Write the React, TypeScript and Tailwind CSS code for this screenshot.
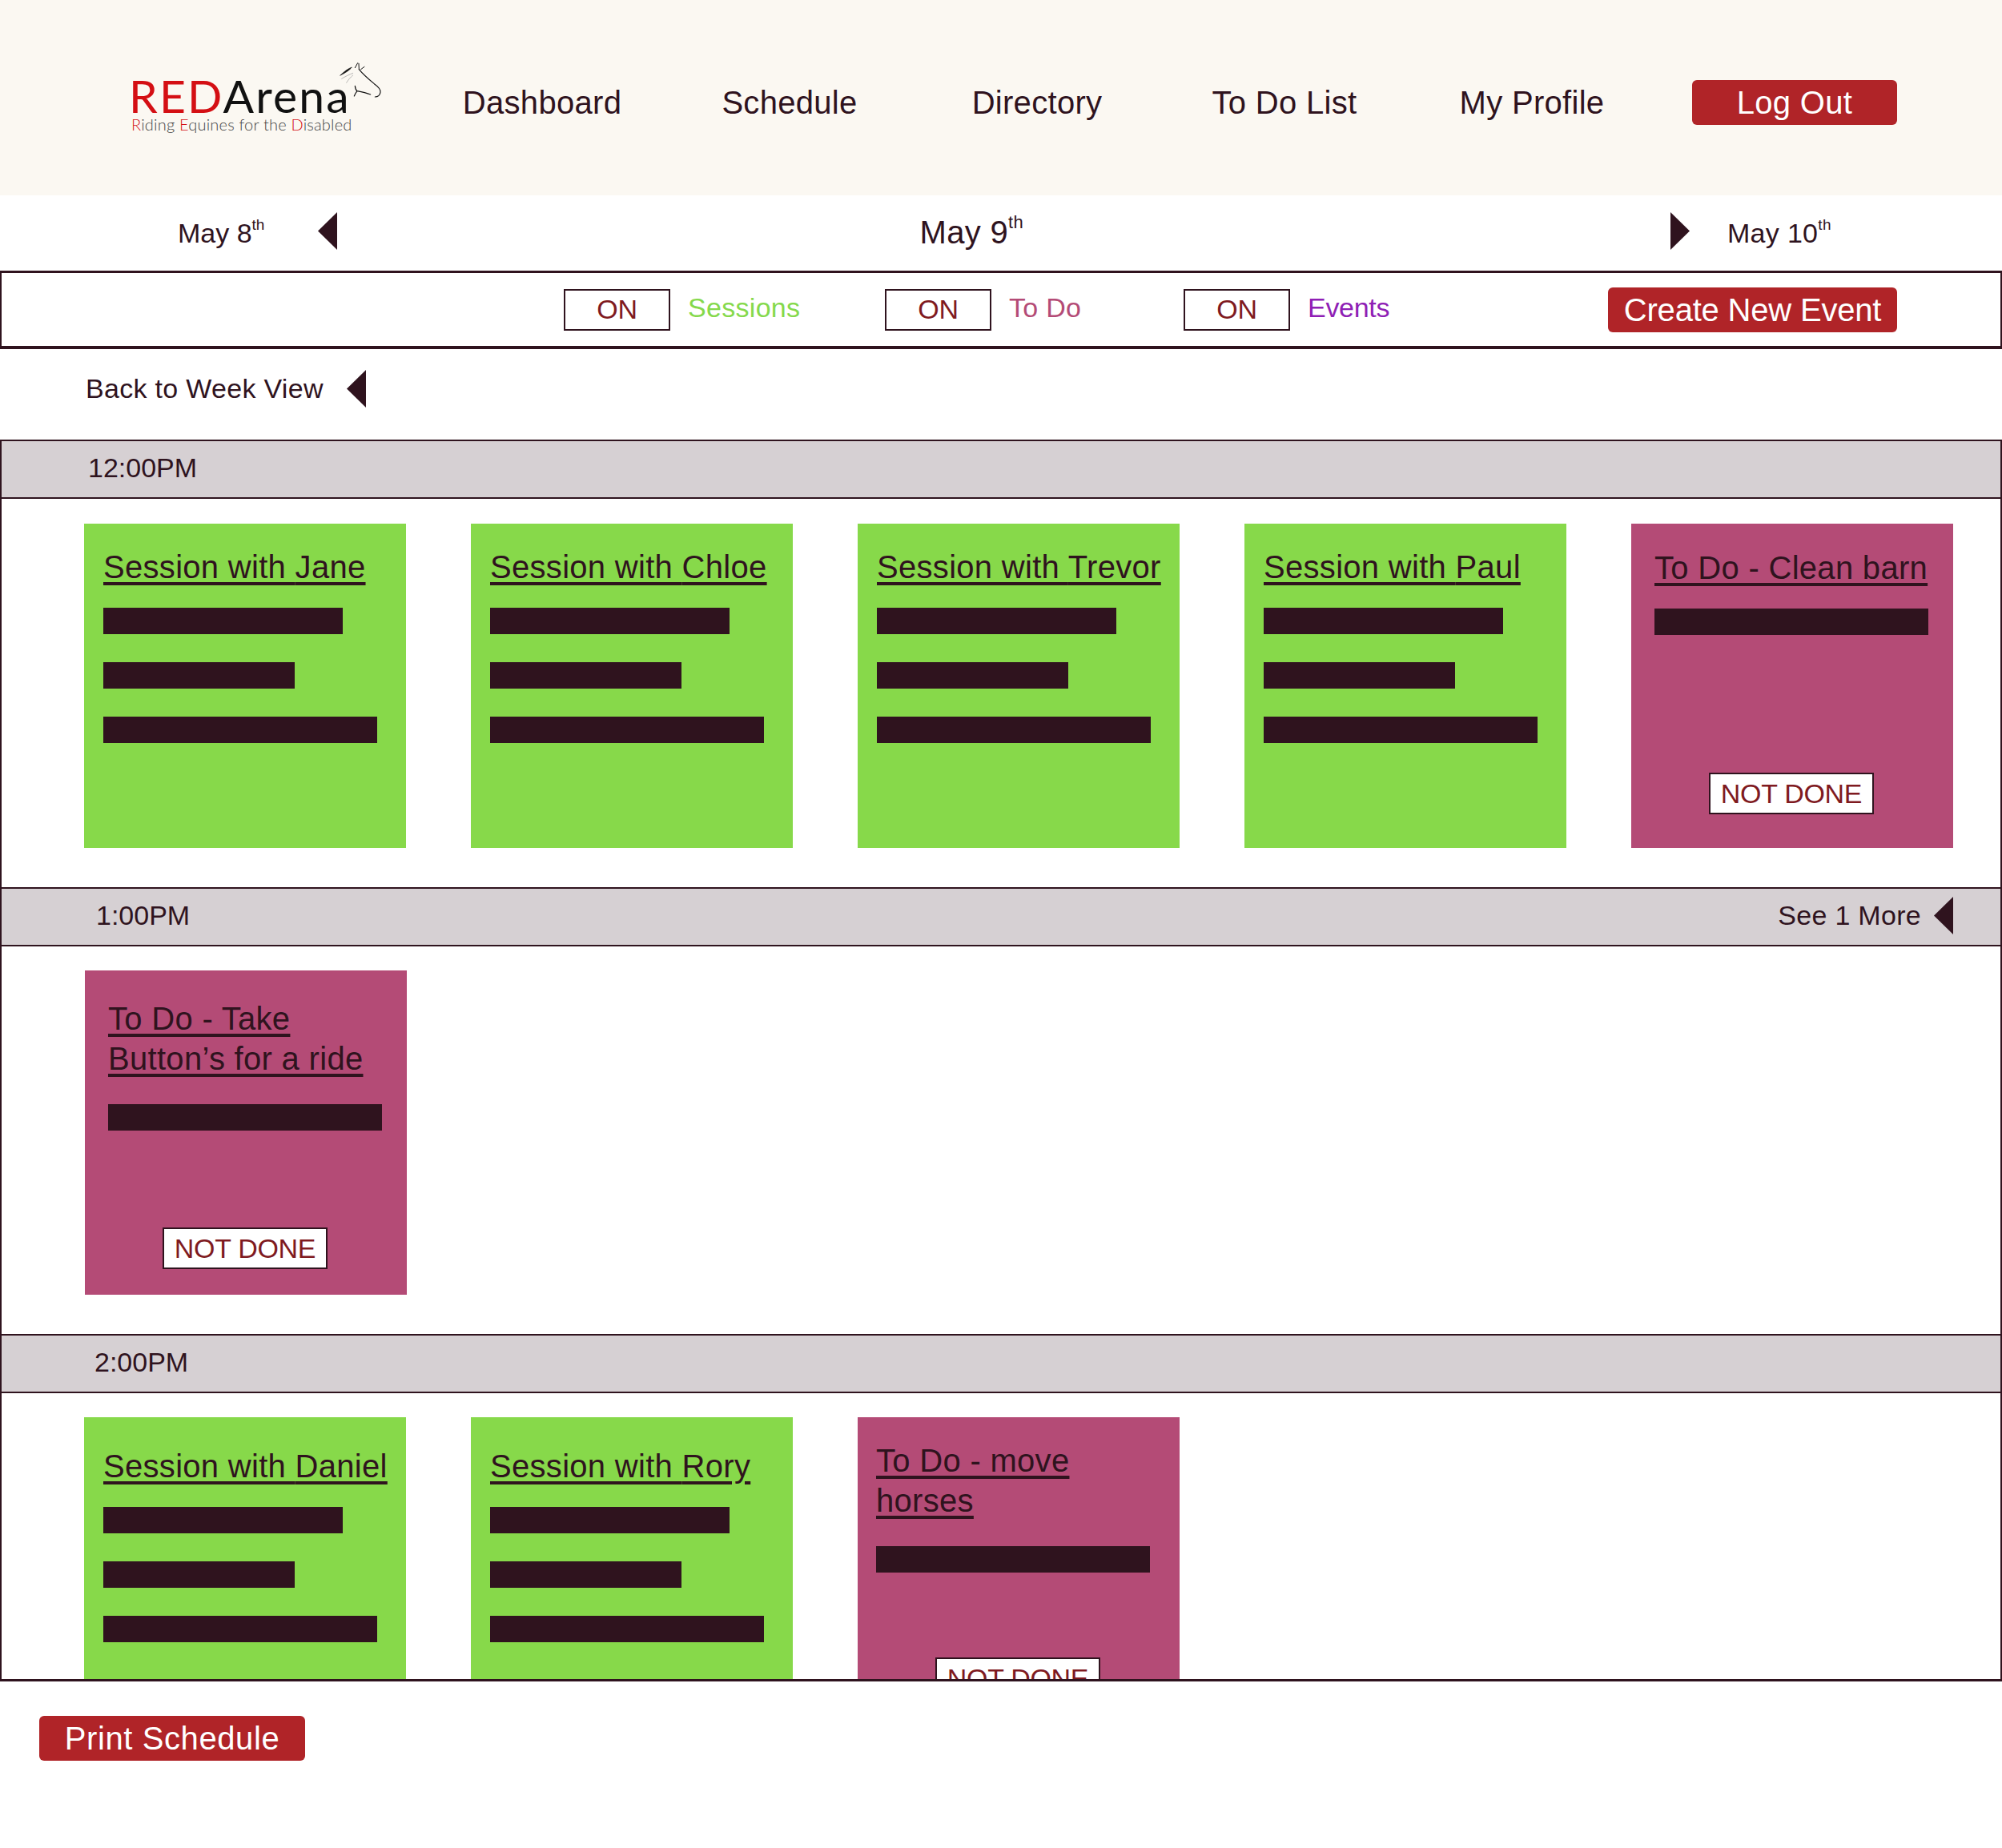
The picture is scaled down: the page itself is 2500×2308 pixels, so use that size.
const font = { fontFamily: '"Liberation Sans", Arial, sans-serif' };

const navItems = [
  { label: "Dashboard", w: "w-[308px]" },
  { label: "Schedule", w: "w-[310px]" },
  { label: "Directory", w: "w-[308px]" },
  { label: "To Do List", w: "w-[310px]" },
  { label: "My Profile", w: "w-[308px]" },
];

const HorseHead = () => (
  <svg width="80" height="60" viewBox="0 0 240 180" fill="none" stroke="#111" strokeLinecap="round" strokeLinejoin="round" className="absolute left-[249px] top-[-12px]">
    <path d="M45 72 C60 58 72 48 88 42 C80 52 66 62 45 72 Z" fill="#111" strokeWidth="2" />
    <path d="M100 44 L110 26 M115 50 L114 28 M122 50 L135 40" strokeWidth="3" />
    <path d="M115 50 C128 66 150 86 172 104 C186 114 198 124 195 136 C193 146 186 153 175 153" strokeWidth="3.5" />
    <path d="M100 112 C101 122 104 128 108 131 C124 134 142 138 158 144 M108 131 C104 136 100 142 97 150" strokeWidth="3.5" />
    <path d="M50 85 C64 76 78 70 92 64 M68 100 C74 90 82 80 92 72" strokeWidth="2" stroke="#999" />
  </svg>
);

const Logo = () => (
  <div className="relative w-[280px] h-[80px] ml-[161px] pt-[12px] shrink-0" style={{ fontFamily: "Lato, sans-serif" }}>
    <div className="text-[57px] leading-[50px] font-normal whitespace-nowrap tracking-[2.2px]">
      <span className="text-[#d40f14]">RED</span>
      <span className="text-[#111]">Arena</span>
    </div>
    <div className="ml-[3px] text-[20px] leading-[22px] text-[#444] whitespace-nowrap font-light tracking-[0.2px]">
      <span className="text-[#d40f14]">R</span>iding <span className="text-[#d40f14]">E</span>quines for the <span className="text-[#d40f14]">D</span>isabled
    </div>
    <HorseHead />
  </div>
);

const Header = () => (
  <header className="h-[244px] bg-[#fbf8f2] flex items-center">
    <Logo />
    <nav className="flex items-center ml-[82px] text-[40px] text-[#2f131e] h-[56px] mt-[11px]">
      {navItems.map((n) => (
        <a key={n.label} className={`${n.w} text-center whitespace-nowrap`}>
          {n.label}
        </a>
      ))}
    </nav>
    <button className="w-[256px] h-[56px] ml-[46px] mt-[11px] rounded-[6px] bg-[#b02428] text-white text-[40px] leading-none">
      Log Out
    </button>
  </header>
);

const Left = () => (
  <svg width="24" height="47" viewBox="0 0 24 47" className="shrink-0">
    <polygon points="24,0 0,23.5 24,47" fill="#2f131e" />
  </svg>
);

const Right = () => (
  <svg width="24" height="47" viewBox="0 0 24 47" className="shrink-0">
    <polygon points="0,0 24,23.5 0,47" fill="#2f131e" />
  </svg>
);

const DateRow = () => (
  <div className="h-[94px] flex items-center text-[#2f131e]">
    <span className="w-[222px] shrink-0" />
    <span className="w-[175px] text-[34px] whitespace-nowrap tracking-normal">
      May 8<sup className="text-[19px] align-[6px] leading-none">th</sup>
    </span>
    <span className="-mt-[5px]">
      <Left />
    </span>
    <span className="w-[857px] shrink-0 text-right text-[40px] whitespace-nowrap -mt-[2px]">
      May 9<sup className="text-[22px] align-[8px] leading-none">th</sup>
    </span>
    <span className="w-[808px] shrink-0" />
    <span className="-mt-[5px]">
      <Right />
    </span>
    <span className="ml-[47px] text-[34px] whitespace-nowrap">
      May 10<sup className="text-[19px] align-[6px] leading-none">th</sup>
    </span>
  </div>
);

const Toggle = ({ label, color, w }: { label: string; color: string; w: string }) => (
  <div className={`${w} flex items-center shrink-0`}>
    <span className="w-[133px] h-[52px] border-2 border-[#2f131e] flex items-center justify-center text-[34px] text-[#7f1a1f] tracking-[-0.3px]">
      ON
    </span>
    <span className={`ml-[22px] -mt-[5px] text-[34px] ${color}`}>{label}</span>
  </div>
);

const FilterBar = () => (
  <div className="h-[98px] border-t-[3px] border-b-[4px] border-x-2 border-[#2f131e] flex items-center">
    <div className="w-[702px] shrink-0" />
    <Toggle label="Sessions" color="text-[#85d94c]" w="w-[401px]" />
    <Toggle label="To Do" color="text-[#b44b76]" w="w-[373px]" />
    <Toggle label="Events" color="text-[#8f1fb5] tracking-[-0.3px]" w="w-[530px]" />
    <button className="w-[361px] h-[56px] rounded-[6px] bg-[#b02428] text-white text-[40px] leading-none whitespace-nowrap tracking-[-0.2px]">
      Create New Event
    </button>
  </div>
);

const BackRow = () => (
  <div className="h-[113px] pl-[107px] pb-[15px] flex items-center gap-[29px] text-[34px] text-[#2f131e]">
    <span>Back to Week View</span>
    <Left />
  </div>
);

const TimeBar = ({ time, pad, more }: { time: string; pad: string; more?: string }) => (
  <div className={`h-[74px] shrink-0 bg-[#d6d0d3] border-y-2 border-[#2f131e] pb-[3px] flex items-center justify-between text-[34px] text-[#2f131e] tracking-normal ${pad} pr-[59px]`}>
    <span>{time}</span>
    {more && (
      <span className="flex items-center gap-[16px] tracking-[0.3px]">
        {more}
        <Left />
      </span>
    )}
  </div>
);

const Bar = ({ w }: { w: string }) => <div className={`h-[33px] bg-[#2f131e] ${w}`} />;

const SessionCard = ({ name, top = "pt-[30px]" }: { name: string; top?: string }) => (
  <div className={`w-[402px] h-[405px] shrink-0 bg-[#87d94a] ${top} pl-[24px] text-[#2f131e]`}>
    <a className="block text-[40px] leading-[48px] underline underline-offset-[5px] whitespace-nowrap">
      Session with {name}
    </a>
    <div className="mt-[27px] flex flex-col gap-[35px]">
      <Bar w="w-[299px]" />
      <Bar w="w-[239px]" />
      <Bar w="w-[342px]" />
    </div>
  </div>
);

const TodoCard = ({
  lines,
  pad,
  barTop,
  doneBottom,
}: {
  lines: string[];
  pad: string;
  barTop: string;
  doneBottom: string;
}) => (
  <div className={`relative w-[402px] h-[405px] shrink-0 bg-[#b44b76] ${pad} text-[#2f131e]`}>
    <a className="block text-[40px] leading-[50px] underline underline-offset-[5px] whitespace-nowrap">
      {lines.map((l) => (
        <span key={l} className="block">
          {l}
        </span>
      ))}
    </a>
    <div className={barTop}>
      <Bar w="w-[342px]" />
    </div>
    <span className={`absolute left-[97px] ${doneBottom} w-[206px] h-[52px] border-2 border-[#2f131e] bg-white flex items-center justify-center text-[34px] text-[#7f1a1f] tracking-[-0.3px]`}>
      NOT DONE
    </span>
  </div>
);

const Schedule = () => (
  <div className="h-[1551px] overflow-hidden border-x-2 border-b-[3px] border-[#2f131e] flex flex-col">
    <TimeBar time="12:00PM" pad="pl-[108px]" />
    <div className="flex gap-[81px] pl-[103px] pt-[31px] pb-[49px] shrink-0">
      <SessionCard name="Jane" />
      <SessionCard name="Chloe" />
      <SessionCard name="Trevor" />
      <SessionCard name="Paul" />
      <TodoCard lines={["To Do - Clean barn"]} pad="pl-[29px] pt-[30px]" barTop="mt-[26px]" doneBottom="bottom-[42px]" />
    </div>
    <TimeBar time="1:00PM" pad="pl-[118px]" more="See 1 More" />
    <div className="flex gap-[81px] pl-[104px] pt-[30px] pb-[49px] shrink-0">
      <TodoCard lines={["To Do - Take", "Button’s for a ride"]} pad="pl-[29px] pt-[35px]" barTop="mt-[32px]" doneBottom="bottom-[32px]" />
    </div>
    <TimeBar time="2:00PM" pad="pl-[116px]" />
    <div className="flex gap-[81px] pl-[103px] pt-[30px] shrink-0">
      <SessionCard name="Daniel" top="pt-[37px]" />
      <SessionCard name="Rory" top="pt-[37px]" />
      <TodoCard lines={["To Do - move", "horses"]} pad="pl-[23px] pt-[29px]" barTop="mt-[32px]" doneBottom="bottom-[53px]" />
    </div>
  </div>
);

export default function App() {
  return (
    <div className="w-[2500px] h-[2308px] bg-white overflow-hidden tracking-[0.3px]" style={font}>
      <Header />
      <DateRow />
      <FilterBar />
      <BackRow />
      <Schedule />
      <button className="ml-[49px] mt-[43px] w-[332px] h-[56px] rounded-[6px] bg-[#b02428] text-white text-[40px] leading-none tracking-[0.6px]">
        Print Schedule
      </button>
    </div>
  );
}
